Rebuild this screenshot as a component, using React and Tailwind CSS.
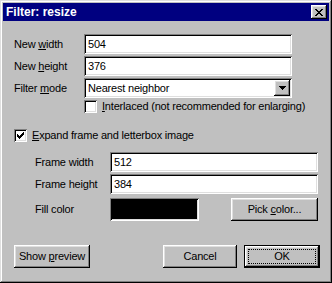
import React from "react";

const sunken =
  "shadow-[inset_1px_1px_0_#808080,inset_-1px_-1px_0_#ffffff,inset_2px_2px_0_#000000,inset_-2px_-2px_0_#dfdfdf]";
const raised =
  "shadow-[inset_-1px_-1px_0_#000000,inset_1px_1px_0_#ffffff,inset_-2px_-2px_0_#808080,inset_2px_2px_0_#dfdfdf]";

function Field({ value, w = "w-[208px]" }) {
  return (
    <div className={`${w} h-[20px] bg-white ${sunken} flex items-center pl-[4px]`}>
      {value}
    </div>
  );
}

function Check({ checked }) {
  return (
    <div className={`w-[13px] h-[13px] bg-white ${sunken} flex items-center justify-center shrink-0`}>
      {checked && (
        <svg width="7" height="7" viewBox="0 0 7 7" shapeRendering="crispEdges">
          <rect x="6" y="0" width="1" height="3" fill="#000" />
          <rect x="5" y="1" width="1" height="3" fill="#000" />
          <rect x="4" y="2" width="1" height="3" fill="#000" />
          <rect x="3" y="3" width="1" height="3" fill="#000" />
          <rect x="2" y="4" width="1" height="3" fill="#000" />
          <rect x="1" y="3" width="1" height="3" fill="#000" />
          <rect x="0" y="2" width="1" height="3" fill="#000" />
        </svg>
      )}
    </div>
  );
}

function Button({ children, w, className = "" }) {
  return (
    <div className={`${w} h-[23px] bg-[#c0c0c0] ${raised} flex items-center justify-center ${className}`}>
      {children}
    </div>
  );
}

export default function App() {
  return (
    <div
      className="w-[332px] h-[283px] bg-[#c0c0c0] p-[3px] text-[11px] leading-none text-black tracking-[-0.2px] shadow-[inset_-1px_-1px_0_#000000,inset_1px_1px_0_#dfdfdf,inset_-2px_-2px_0_#808080,inset_2px_2px_0_#ffffff] flex flex-col"
      style={{ fontFamily: '"Liberation Sans", Arial, sans-serif' }}
    >
      {/* title bar */}
      <div className="h-[18px] bg-[#000080] flex items-center pl-[3px] pr-[2px] shrink-0">
        <span className="text-white font-bold text-[12px] tracking-normal">Filter: resize</span>
        <div className={`ml-auto w-[16px] h-[14px] bg-[#c0c0c0] ${raised} flex items-center justify-center`}>
          <svg width="8" height="7" viewBox="0 0 8 7" shapeRendering="crispEdges">
            <path d="M0 0h2v1h1v1h2v-1h1v-1h2v1h-1v1h-1v1h-1v1h1v1h1v1h1v1h-2v-1h-1v-1h-2v1h-1v1h-2v-1h1v-1h1v-1h1v-1h-1v-1h-1v-1h-1z" fill="#000" />
          </svg>
        </div>
      </div>

      <div className="flex flex-col">
        {/* new width */}
        <div className="mt-[13px] flex items-center pl-[11px]">
          <div className="w-[70px]">New <span className="underline">w</span>idth</div>
          <Field value="504" />
        </div>
        <div className="mt-[2px] flex items-center pl-[11px]">
          <div className="w-[70px]">New <span className="underline">h</span>eight</div>
          <Field value="376" />
        </div>
        <div className="mt-[2px] flex items-center pl-[11px]">
          <div className="w-[70px]">Filter <span className="underline">m</span>ode</div>
          <div className={`w-[208px] h-[20px] bg-white ${sunken} flex items-center pl-[4px] pr-[2px]`}>
            <span>Nearest neighbor</span>
            <div className={`ml-auto w-[16px] h-[16px] bg-[#c0c0c0] ${raised} flex items-center justify-center`}>
              <svg width="7" height="4" viewBox="0 0 7 4" shapeRendering="crispEdges">
                <path d="M0 0h7v1h-1v1h-1v1h-1v1h-1v-1h-1v-1h-1v-1h-1z" fill="#000" />
              </svg>
            </div>
          </div>
        </div>
        <div className="mt-[2px] flex items-center pl-[81px] gap-[5px] h-[13px]">
          <Check />
          <span><span className="underline">I</span>nterlaced (not recommended for enlarging)</span>
        </div>

        {/* expand */}
        <div className="mt-[16px] flex items-center pl-[11px] gap-[5px] h-[13px]">
          <Check checked />
          <span><span className="underline">E</span>xpand frame and letterbox image</span>
        </div>
        <div className="mt-[10px] flex items-center pl-[32px]">
          <div className="w-[75px]">Frame width</div>
          <Field value="512" />
        </div>
        <div className="mt-[2px] flex items-center pl-[32px]">
          <div className="w-[75px]">Frame height</div>
          <Field value="384" />
        </div>
        <div className="mt-[4px] flex items-center pl-[32px]">
          <div className="w-[75px]">Fill color</div>
          <div className={`w-[89px] h-[23px] bg-black ${sunken}`} />
          <Button w="w-[87px]" className="ml-[32px]">
            <span>Pick <span className="underline">c</span>olor...</span>
          </Button>
        </div>

        {/* bottom buttons */}
        <div className="mt-[24px] flex items-center pl-[11px]">
          <Button w="w-[76px]">
            <span>Show <span className="underline">p</span>review</span>
          </Button>
          <Button w="w-[74px]" className="ml-[73px]">Cancel</Button>
          <div className="ml-[7px] w-[76px] h-[23px] border border-black">
            <div className={`w-full h-full bg-[#c0c0c0] ${raised} p-[3px]`}>
              <div className="w-full h-full border border-dotted border-black flex items-center justify-center">
                OK
              </div>
            </div>
          </div>
        </div>
      </div>
    </div>
  );
}
